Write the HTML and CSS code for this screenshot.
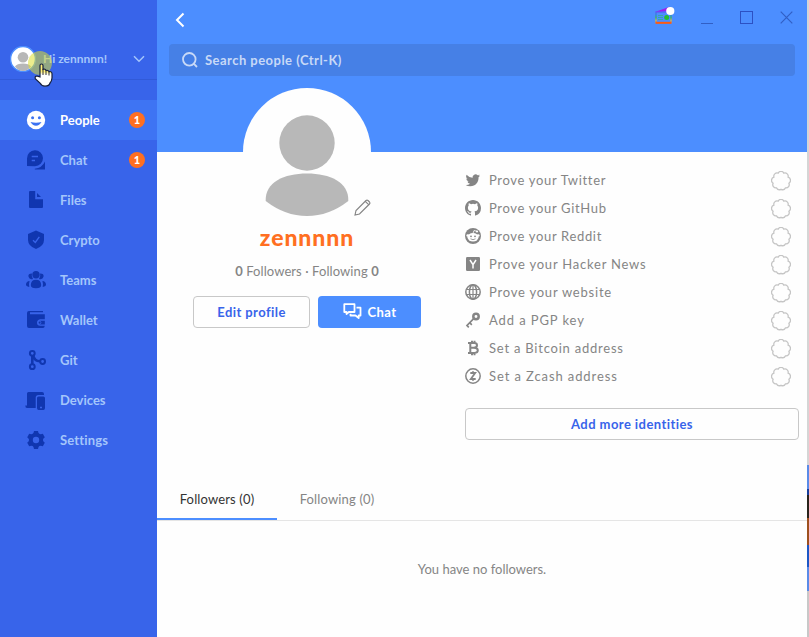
FILE: index.html
```html
<!DOCTYPE html>
<html lang="en">
<head>
<meta charset="utf-8">
<title>People</title>
<link rel="stylesheet" href="styles.css">
</head>
<body>
<svg width="0" height="0" class="defs">
  <symbol id="badge" viewBox="0 0 20 20"><path d="M7.100 2.100A3.300 3.300 0 0 1 12.900 2.100A3.300 3.300 0 0 1 17.100 6.100A3.400 3.400 0 0 1 17.900 12.200A3.300 3.300 0 0 1 14.500 16.900A3.400 3.400 0 0 1 10 18.300A3.400 3.400 0 0 1 5.500 16.900A3.300 3.300 0 0 1 2.100 12.200A3.400 3.400 0 0 1 2.900 6.100A3.300 3.300 0 0 1 7.100 2.100Z" fill="none" stroke="#c5c5c5" stroke-width="1.300"/></symbol>
</svg>
<div class="app">
  <aside class="sidebar">
    <div class="account">
      <span class="account-avatar"><svg viewBox="0 0 26 26" width="26" height="26"><circle cx="13" cy="13" r="12.500" fill="#fff" stroke="#4c8eff" stroke-width="1.500"/><circle cx="13" cy="11.300" r="5.300" fill="#b7b7b7"/><path d="M4.900 20.500Q7 17.600 13 17.600T21.100 20.500Q17.500 25 13 25T4.900 20.500Z" fill="#b7b7b7"/></svg></span>
      <span class="account-name">Hi zennnnn!</span>
      <svg class="chevron" viewBox="0 0 12 8" width="12" height="8"><path d="M1 1.300L6 6.300L11 1.300" fill="none" stroke="#a4c6fb" stroke-width="1.500"/></svg>
      <span class="click-halo"></span>
      <svg class="pointer" viewBox="0 0 20 24" width="20" height="24"><defs><linearGradient id="finger" x2="0" y2="1"><stop offset=".35" stop-color="#fff178"/><stop offset=".48" stop-color="#fff"/></linearGradient></defs><path d="M6 14V2.600Q6 1 7.500 1T9 2.600V6.400Q11.200 5.500 12 7.500Q14.200 6.700 15 8.700Q17.800 8 18 10.800V15Q17.800 18 16 20Q15.300 23 11 23.200Q7.500 23 6 20L1.300 15.800Q.5 12.500 3.500 13.200Z" fill="url(#finger)" stroke="#17213e" stroke-width="1.200"/><path d="M9 6V12M12 7.500V12M15 9V12.500" stroke="#333" stroke-width="1"/></svg>
    </div>
    <nav class="nav">
      <a class="item active"><svg viewBox="0 0 20 20"><circle cx="10" cy="10" r="9.200" fill="#fff"/><circle cx="6.600" cy="7.700" r="1.500" fill="#3b72f2"/><circle cx="13.400" cy="7.700" r="1.500" fill="#3b72f2"/><path d="M4.500 12Q10 13.500 15.500 12Q13.500 15.700 10 15.700T4.500 12Z" fill="#3b72f2"/></svg><span class="label">People</span><b class="count">1</b></a>
      <a class="item"><svg viewBox="0 0 20 20"><path d="M1 16V8.500A8 8 0 1 1 9 16.200ZM19 11.500V19.400H8.800V18.700Q16 18 19 11.500Z" fill="#1036b0"/><path d="M5.700 6.500H12M5.700 10.500H9" stroke="#3864ea" stroke-width="1.600" fill="none"/></svg><span class="label">Chat</span><b class="count">1</b></a>
      <a class="item"><svg viewBox="0 0 20 20"><path d="M3 2Q3 1 4 1H9.200V9.300H17V17Q17 18 16 18H4Q3 18 3 17ZM11 3L15 7H11Z" fill="#1036b0"/></svg><span class="label">Files</span></a>
      <a class="item"><svg viewBox="0 0 20 20"><path d="M10 .4L18 4V10Q18 16 10 19Q2 16 2 10V4Z" fill="#1036b0"/><path d="M7 10.300L9.300 12.400L13.300 6.800" fill="none" stroke="#3864ea" stroke-width="1.400"/></svg><span class="label">Crypto</span></a>
      <a class="item"><svg viewBox="0 0 20 20"><g fill="#1036b0"><circle cx="10" cy="4.800" r="3.700"/><path d="M6 3.500Q5 6.500 7 9Q3.300 10 2.500 6.800T6 3.500ZM14 3.500Q15 6.500 13 9Q16.700 10 17.500 6.800T14 3.500Z"/><path d="M4.800 15Q5 9.800 10 9.800T15.200 15Q15.200 18.300 10 18.300T4.800 15ZM3.600 11Q2.600 14 3.300 17Q-.2 16.500 0 14.300Q.3 11.200 3.600 11ZM16.400 11Q17.400 14 16.700 17Q20.200 16.500 20 14.300Q19.700 11.200 16.400 11Z"/></g></svg><span class="label">Teams</span></a>
      <a class="item"><svg viewBox="0 0 20 20"><path d="M3 1H17V2.300H4V4.300H18.800V9.200H14Q11 9.700 11 12.700T14 15.800H18.800Q18.500 18 17 18H3Q1 18 1 16V3Q1 1 3 1Z" fill="#1036b0"/><path d="M14 10.700H18.800V14.500H14Q12.400 14 12.400 12.600T14 10.700Z" fill="#1036b0"/><circle cx="13.500" cy="12.600" r="1.400" fill="none" stroke="#3864ea" stroke-width=".9"/></svg><span class="label">Wallet</span></a>
      <a class="item"><svg viewBox="0 0 20 20"><g fill="none" stroke="#1036b0" stroke-width="2"><path d="M6.300 5V15M7 5Q8.500 11.400 14 11.300" stroke-width="2.600"/><circle cx="6.300" cy="3.300" r="2.400"/><circle cx="6.300" cy="16.700" r="2.400"/><circle cx="16.600" cy="11.500" r="2.400"/></g></svg><span class="label">Git</span></a>
      <a class="item"><svg viewBox="0 0 20 20"><path d="M1 3.500Q1 2 2.500 2H16Q18 2 18 4V5H12.500Q9.700 5 9.700 7.500V18H1Q-.7 18-.7 15.500H1ZM12.700 6.500H17.300Q19 6.500 19 8V18Q19 20 17.300 20H12.700Q11 20 11 18V8Q11 6.500 12.700 6.500Z" fill="#1036b0"/><path d="M14 17.500H16" stroke="#3864ea" stroke-width="1.400"/></svg><span class="label">Devices</span></a>
      <a class="item"><svg viewBox="0 0 20 20"><circle cx="10" cy="10" r="5.200" fill="none" stroke="#1036b0" stroke-width="4"/><g fill="#1036b0"><path id="tooth" d="M7.200 4L8 1H12L12.800 4Z"/><use href="#tooth" transform="rotate(60 10 10)"/><use href="#tooth" transform="rotate(120 10 10)"/><use href="#tooth" transform="rotate(180 10 10)"/><use href="#tooth" transform="rotate(240 10 10)"/><use href="#tooth" transform="rotate(300 10 10)"/></g></svg><span class="label settings">Settings</span></a>
    </nav>
  </aside>

  <main class="main">
    <header class="header">
      <div class="toolbar">
        <svg class="back" viewBox="0 0 10 16" width="10" height="16"><path d="M8.500 1.500L2 8L8.500 14.500" fill="none" stroke="#fff" stroke-width="2"/></svg>
        <div class="window-tools">
          <svg width="20" height="19" viewBox="0 0 20 19"><defs><linearGradient id="rainbow" gradientUnits="userSpaceOnUse" x1="0" y1="5" x2="0" y2="17"><stop offset="0" stop-color="#6b45ff"/><stop offset=".3" stop-color="#2e87d7"/><stop offset=".55" stop-color="#38bc50"/><stop offset=".8" stop-color="#e4b93d"/><stop offset="1" stop-color="#ff5d16"/></linearGradient></defs><path d="M1.500 6L14 1.500V4Z" fill="#a020ec" stroke="#a020ec" stroke-width="1.200"/><rect x="1" y="6" width="15" height="11" fill="#4c8eff" stroke="url(#rainbow)" stroke-width="1.300"/><path d="M3 9.500H8M3 11.500H8M3 13.500H8" stroke="#35a9a5"/><circle cx="11.700" cy="11.500" r="2.500" fill="#25bf30"/><path d="M1 16.700H16" stroke="#ff5a12" stroke-width="1.700"/><circle cx="15.300" cy="5" r="4.100" fill="#fff"/></svg>
          <svg width="12" height="14" viewBox="0 0 12 14"><path d="M0 12.500H12" stroke="#315fc5"/></svg>
          <svg width="13" height="13" viewBox="0 0 13 13"><rect x=".5" y=".5" width="12" height="12" fill="none" stroke="#2c51c4"/></svg>
          <svg width="13" height="13" viewBox="0 0 13 13"><path d="M.7 .7L12.300 12.300M12.300 .7L.7 12.300" stroke="#315fc5" stroke-width="1.200"/></svg>
        </div>
      </div>
      <div class="search"><svg viewBox="0 0 16 16" width="16" height="16"><circle cx="7.300" cy="7.300" r="6.300"/><path d="M11.700 11.700L15 15"/></svg><span>Search people (Ctrl-K)</span></div>
    </header>

    <section class="profile">
      <div class="bio">
        <div class="avatar">
          <svg viewBox="0 0 128 128" width="128" height="128"><circle cx="64" cy="64" r="64" fill="#fefefe"/><circle cx="64" cy="55" r="27.700" fill="#b8b8b8"/><path d="M22.700 113C22 94 41 85.500 64 85.500S106 94 105.300 113Q86 128 64 128T22.700 113Z" fill="#b8b8b8"/></svg>
          <svg class="edit" viewBox="0 0 17 17" width="17" height="17"><path d="M1 16L2 11.500L12 1.500Q13 .7 14 1.500L15.500 3Q16.300 4 15.500 5L5.500 15ZM11.300 2.400L14.600 5.700" fill="none" stroke="#858585" stroke-width="1.150"/></svg>
        </div>
        <h1 class="name">zennnnn</h1>
        <p class="stats"><b>0</b> Followers · Following <b>0</b></p>
        <div class="actions">
          <button class="btn edit-profile"><span>Edit profile</span></button>
          <button class="btn chat"><svg viewBox="0 0 19 17" width="19" height="17"><path d="M1.300 1.200H11.500V9H5.800L3.500 11V9H1.300ZM13.500 4.700H17.500V12.500H15.700V15L12.500 12.500H7.500V10.800" fill="none" stroke="#fff" stroke-width="1.800" stroke-linejoin="round"/></svg><span>Chat</span></button>
        </div>
      </div>
      <div class="identities">
        <ul class="proofs">
          <li><svg viewBox="0 0 24 24"><path d="M22.500 5.200q-1.500.7-2.600.8q1.500-1 1.900-2.300q-1.500.8-2.800 1.100a4.500 4.500 0 0 0-7.600 4Q6 8.600 2.400 4.300q-2 3.700 1.400 6.100q-1 0-2-.6q.1 3.300 3.600 4.500q-1 .3-2 .1q1 2.800 4.100 3.100Q4.700 19.700 1 19.400Q4 21.500 8 21.500C16 21.500 20.600 15 20.300 8q1.300-1 2.200-2.800Z"/></svg><span>Prove your Twitter</span><svg class="status"><use href="#badge"/></svg></li>
          <li><svg viewBox="0 0 16 16"><path d="M8 0C3.580 0 0 3.580 0 8c0 3.540 2.290 6.530 5.470 7.590.4.070.550-.170.550-.380v-1.490c-2.230.480-2.700-.95-2.700-.95-.360-.920-.890-1.170-.890-1.170-.730-.500.050-.490.050-.490.800.060 1.230.830 1.230.830.720 1.220 1.880.870 2.330.66.070-.520.280-.870.510-1.070-1.780-.2-3.640-.890-3.640-3.950 0-.870.310-1.590.820-2.150-.080-.2-.360-1.020.080-2.120 0 0 .670-.210 2.200.82a7.600 7.600 0 0 1 4 0c1.530-1.040 2.200-.82 2.200-.82.440 1.100.160 1.920.080 2.120.510.560.820 1.270.820 2.150 0 3.070-1.870 3.750-3.650 3.950.290.250.540.730.540 1.480v2.200c0 .210.150.460.550.380A8 8 0 0 0 16 8c0-4.420-3.580-8-8-8Z"/></svg><span>Prove your GitHub</span><svg class="status"><use href="#badge"/></svg></li>
          <li><svg viewBox="0 0 16 16"><circle cx="8" cy="8" r="8"/><ellipse cx="8" cy="9.200" rx="5.500" ry="4.200" fill="#fff"/><circle cx="2.700" cy="7.500" r="1.300" fill="#fff"/><circle cx="13.300" cy="7.500" r="1.300" fill="#fff"/><path d="M8 5.300L9 2.500L12 3.300" fill="none" stroke="#fff" stroke-width=".8"/><circle cx="12" cy="3.500" r="1.100" fill="#fff"/><circle cx="6" cy="8.300" r=".9"/><circle cx="10" cy="8.300" r=".9"/><path d="M5.500 10.800Q8 12.600 10.500 10.800" fill="none" stroke="#858585" stroke-width=".8"/></svg><span>Prove your Reddit</span><svg class="status"><use href="#badge"/></svg></li>
          <li><svg viewBox="0 0 16 16"><rect x="1" y="1" width="14" height="14" rx="1.200"/><path d="M5 4L8 8.700L11 4M8 8.500V12.500" fill="none" stroke="#fff" stroke-width="1.500"/></svg><span class="wide">Prove your Hacker News</span><svg class="status"><use href="#badge"/></svg></li>
          <li><svg viewBox="0 0 16 16"><g fill="none" stroke="#858585" stroke-width="1.500"><circle cx="8" cy="8" r="7.200"/><ellipse cx="8" cy="8" rx="3.600" ry="7.200"/><path d="M1.500 5.500H14.500M1.500 10.500H14.500M8 1V15" stroke-width="1.200"/></g></svg><span class="wide">Prove your website</span><svg class="status"><use href="#badge"/></svg></li>
          <li><svg viewBox="0 0 16 16"><g fill="none" stroke="#858585"><circle cx="11" cy="4.500" r="2.700" stroke-width="2.500"/><path d="M8.700 6.700L2 13.500L3.800 15.300M4.700 10.700L6.800 12.800" stroke-width="1.700"/></g></svg><span class="widest">Add a PGP key</span><svg class="status"><use href="#badge"/></svg></li>
          <li><svg viewBox="0 0 16 16"><path d="M3 3H9.200Q12 3 12 5.300T9 7.800Q12.800 7.800 12.800 10.300T9.500 13H3M5.300 3V13M5.300 7.800H9M7 .7V3M9.500 .7V3M7 13V15.300M9.500 13V15.300" fill="none" stroke="#858585" stroke-width="2"/></svg><span class="wide">Set a Bitcoin address</span><svg class="status"><use href="#badge"/></svg></li>
          <li><svg viewBox="0 0 16 16"><g fill="none" stroke="#858585"><circle cx="8" cy="8" r="7.200" stroke-width="1.500"/><path d="M5.300 5H10.200L5.800 11H10.700M8 3.200V5M8 11V12.800" stroke-width="1.800"/></g></svg><span class="widest">Set a Zcash address</span><svg class="status"><use href="#badge"/></svg></li>
        </ul>
        <button class="btn add"><span>Add more identities</span></button>
      </div>
    </section>

    <div class="tabs"><a class="tab selected"><span>Followers (0)</span></a><a class="tab"><span>Following (0)</span></a></div>
    <p class="empty"><span>You have no followers.</span></p>
  </main>
  <div class="desktop-edge"></div>
</div>
</body>
</html>
```
FILE: styles.css
```css
* { box-sizing: border-box; }
body { margin: 0; font-family: Lato, "Open Sans", sans-serif; font-size: 13px; color: #858585; background: #fefefe; }
.defs { position: absolute; }
.app { display: flex; width: 809px; height: 637px; overflow: hidden; }

.sidebar { width: 157px; background: #3864ea; }
.account { position: relative; display: flex; align-items: center; height: 80px; padding: 39px 12px 0 10px; border-bottom: 1px solid #315ad8; }
.account-avatar { display: flex; width: 26px; }
.account-name { flex: 1; padding: 0 0 1px 7px; color: #a4c6fb; font-weight: 700; font-size: 12px; }
.click-halo { position: absolute; left: 28px; top: 51px; width: 24px; height: 24px; border-radius: 50%; background: rgba(220, 222, 48, .55); }
.pointer { position: absolute; left: 34px; top: 63px; }
.nav { padding-top: 20px; }
.item { display: flex; align-items: center; height: 40px; padding: 0 12px 0 26px; color: #a4c6fb; font-weight: 700; }
.item > svg { width: 20px; height: 20px; margin-right: 14px; overflow: visible; }
.item .label { flex: 1; }
.item .settings { letter-spacing: .15px; }
.active { background: #3e74f3; }
.item.active { color: #fff; }
.count { width: 16px; height: 16px; border-radius: 50%; background: #ff6f21; color: #fff; font-size: 11px; line-height: 16px; text-align: center; }

.main { width: 650px; background: #fefefe; }
.header { height: 152px; padding: 0 12px; background: #4c8eff; }
.toolbar { display: flex; justify-content: space-between; height: 44px; padding: 12px 2px 0 6px; }
.window-tools { display: flex; align-items: center; height: 19px; margin-top: -6px; }
.window-tools svg:nth-child(1) { margin-right: 26px; }
.window-tools svg:nth-child(2) { margin: 4px 27px 0 0; }
.window-tools svg:nth-child(3) { margin: 4px 27px 0 0; }
.window-tools svg:nth-child(4) { margin-top: 4px; }
.search { display: flex; align-items: center; height: 32px; padding-left: 13px; border-radius: 4px; background: #4680e6; color: #c8d9f7; font-weight: 700; letter-spacing: .47px; }
.search svg { margin-right: 7px; fill: none; stroke: #c8d9f7; stroke-width: 1.8; }

.profile { display: flex; height: 328px; }
.bio { display: flex; flex-direction: column; align-items: center; width: 300px; }
.avatar { position: relative; width: 128px; height: 128px; margin-top: -64px; }
.edit { position: absolute; right: 0; bottom: 0; }
.name { margin: 7px 0 0; color: #ff6f21; font-size: 23px; line-height: 28px; font-weight: 900; letter-spacing: .9px; }
.stats { margin: 11px 0 0; line-height: 18px; letter-spacing: .08px; }
.actions { display: flex; gap: 8px; margin-top: 16px; }
.btn { display: flex; align-items: center; justify-content: center; height: 32px; padding: 0; border: 1px solid #c8c8c8; border-radius: 4px; background: #fefefe; color: #3864ea; font: 700 13px Lato, sans-serif; letter-spacing: .43px; }
.edit-profile { width: 117px; }
.chat { gap: 6px; width: 103px; border: 0; background: #4c8eff; color: #fff; }
.chat svg { margin-bottom: 1px; }
.identities { width: 342px; margin-left: 8px; padding-top: 15px; }
.proofs { margin: 0 0 17px; padding: 0; list-style: none; }
.proofs li { display: flex; align-items: center; height: 28px; padding-right: 16px; letter-spacing: .67px; }
.proofs li > svg:first-child { width: 16px; height: 16px; margin: 0 8px 2px 0; fill: #858585; }
.proofs li > span { flex: 1; margin-bottom: 2px; }
.proofs .wide { letter-spacing: .78px; }
.proofs .widest { letter-spacing: .9px; }
.proofs .status { width: 20px; height: 20px; }
.add { width: 334px; }

.tabs { display: flex; height: 41px; border-bottom: 1px solid #e5e5e5; }
.tab { display: flex; align-items: center; justify-content: center; width: 120px; height: 40px; padding-bottom: 2px; letter-spacing: .15px; }
.selected { padding-bottom: 0; border-bottom: 2px solid #4c8eff; color: #333; }
.empty { margin: 40px 0 0; line-height: 16px; text-align: center; }
.desktop-edge { width: 2px; background: linear-gradient(#d5d5d5 0 465px, #5a8be8 465px 489px, #163e9c 489px 495px, #29241c 495px 518px, #9d501f 518px 545px, #1c57c5 545px 567px, #5a8be8 567px 591px, #c8c8c8 591px); }
```
